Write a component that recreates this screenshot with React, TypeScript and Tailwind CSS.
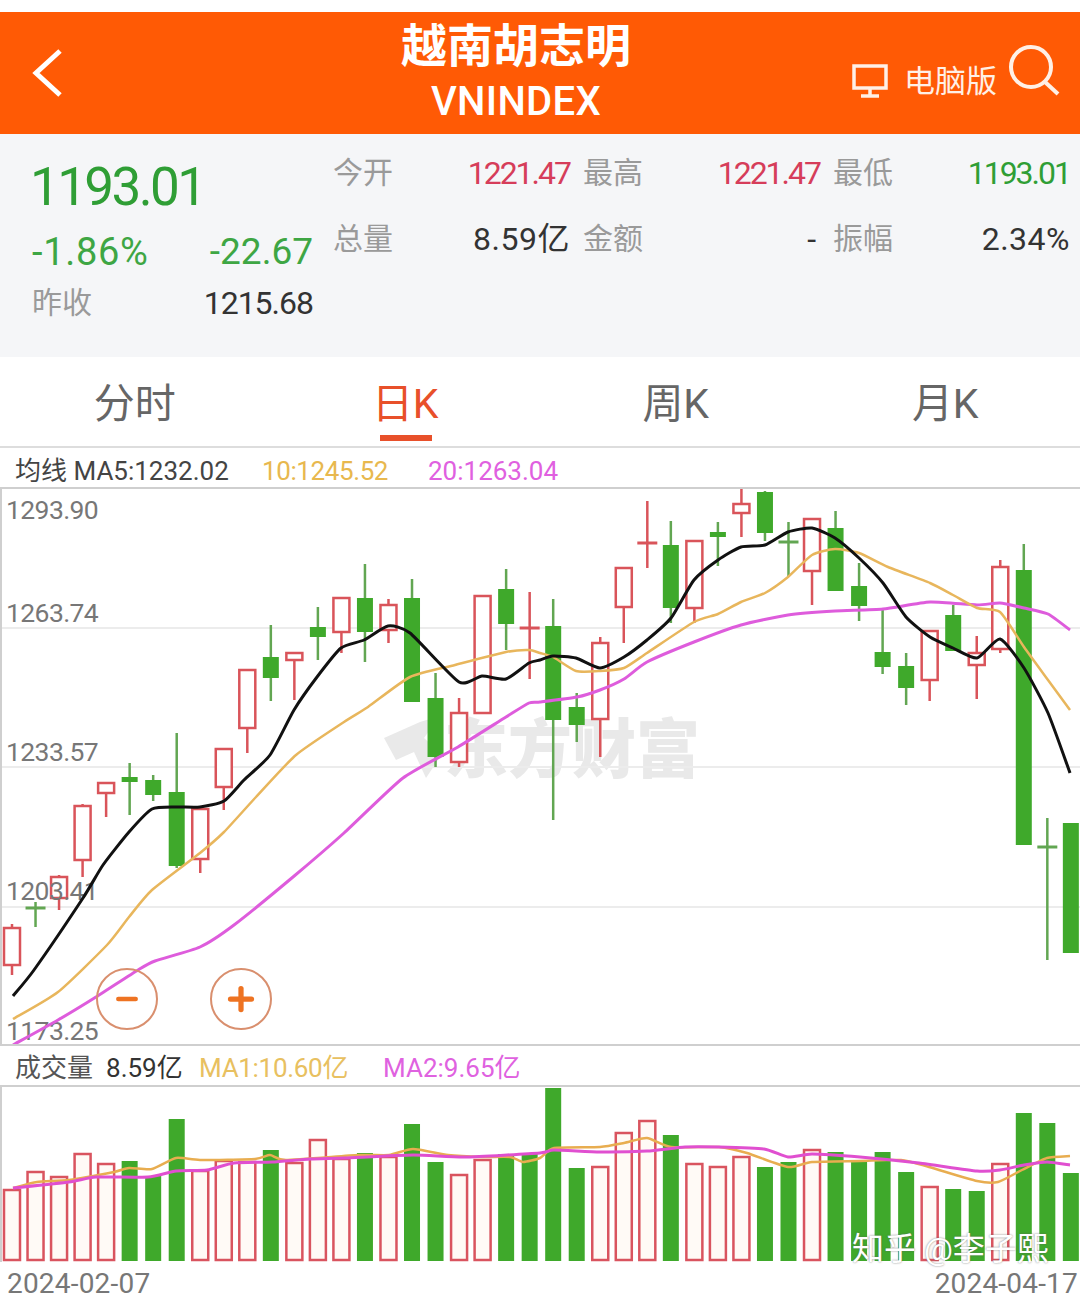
import { Minus, Plus } from 'lucide-react';

type Candle = [wickTop: number, bodyTop: number, bodyBottom: number, wickBottom: number, up: boolean];

const FONT = '"Roboto", "Noto Sans CJK SC", sans-serif';
const RED = '#d9545a';
const GREEN = '#3fa92b';
const WICK_GREEN = '#62a652';

const candleX = (i: number) => 12 + i * 23.53;

const CANDLES: Candle[] = [
  [924, 928, 965, 975, true],
  [902, 907, 909, 927, false],
  [875, 877, 898, 910, true],
  [804, 806, 860, 877, true],
  [783, 783, 793, 817, true],
  [763, 777, 782, 815, false],
  [775, 780, 795, 801, false],
  [733, 792, 866, 868, false],
  [808, 809, 859, 873, true],
  [748, 749, 787, 810, true],
  [669, 670, 728, 753, true],
  [625, 657, 678, 701, false],
  [652, 653, 660, 700, true],
  [607, 627, 637, 660, false],
  [598, 598, 632, 653, true],
  [564, 598, 632, 662, false],
  [599, 605, 630, 643, true],
  [579, 598, 702, 702, false],
  [673, 698, 757, 767, false],
  [698, 713, 762, 767, true],
  [596, 596, 713, 713, true],
  [569, 589, 624, 650, false],
  [592, 627, 629, 679, true],
  [599, 626, 720, 820, false],
  [693, 707, 725, 742, false],
  [637, 643, 719, 757, true],
  [568, 568, 607, 643, true],
  [501, 542, 544, 568, true],
  [521, 545, 608, 623, false],
  [541, 541, 608, 623, true],
  [522, 532, 537, 566, false],
  [489, 504, 513, 537, true],
  [491, 492, 533, 541, false],
  [522, 541, 543, 577, false],
  [519, 519, 571, 605, true],
  [511, 528, 591, 591, false],
  [563, 586, 606, 621, false],
  [608, 652, 667, 674, false],
  [653, 666, 688, 705, false],
  [631, 631, 680, 701, true],
  [605, 615, 651, 651, false],
  [636, 653, 665, 699, true],
  [560, 567, 649, 653, true],
  [544, 570, 845, 845, false],
  [818, 846, 849, 960, false],
  [823, 823, 953, 953, false],
];

const VOLUMES: [number, boolean][] = [
  [1190, true], [1172, true], [1177, true], [1154, true], [1164, true], [1161, false],
  [1176, false], [1119, false], [1171, true], [1161, true], [1162, true], [1150, false],
  [1163, true], [1140, true], [1159, true], [1153, false], [1157, true], [1124, false],
  [1162, false], [1175, true], [1160, true], [1154, false], [1153, false], [1088, false],
  [1168, false], [1167, true], [1133, true], [1121, true], [1135, false], [1164, true],
  [1167, true], [1157, true], [1167, false], [1162, false], [1150, true], [1152, false],
  [1160, false], [1152, false], [1172, false], [1187, true], [1189, false], [1191, false],
  [1164, true], [1113, false], [1123, false], [1173, false],
];

const MA5 = '13,996 34,970 83,898 103,865 129,832 152,809 176,807 200,807 224,801 244,780 270,755 294,710 317,677 341,648 364,640 388,626 410,633 459,682 482,676 506,679 529,663 540,660 553,656 576,658 600,668 624,657 647,640 671,618 694,580 718,560 741,547 765,545 788,532 812,528 835,538 859,558 883,583 906,617 930,637 953,648 977,658 1000,639 1024,668 1048,713 1070,773';
const MA10 = '13,1019 58,992 107,945 129,917 152,890 200,853 224,832 256,797 296,755 344,722 368,707 410,677 455,665 506,652 529,650 540,653 553,657 576,671 600,671 624,668 647,653 694,622 718,614 741,602 765,593 788,577 812,555 835,549 859,553 888,567 930,583 953,595 977,608 1000,612 1024,647 1048,680 1070,710';
const MA20 = '13,1045 58,1020 96,997 138,970 155,961 200,947 234,925 293,877 344,833 403,778 458,747 506,717 529,703 540,702 577,697 600,690 624,679 647,662 694,642 741,625 788,615 835,611 883,609 930,602 977,605 1000,603 1024,608 1048,614 1070,630';
const VOL_MA1 = '13,1188 37,1182 69,1180 114,1172 129,1168 152,1169 176,1158 200,1160 255,1159 270,1155 286,1160 358,1155 389,1155 413,1149 448,1155 482,1157 510,1157 523,1162 540,1158 554,1148 600,1147 624,1143 647,1138 671,1147 719,1147 747,1153 788,1167 812,1162 860,1161 901,1160 929,1167 977,1181 998,1182 1022,1170 1047,1158 1070,1156';
const VOL_MA2 = '13,1188 69,1182 96,1177 148,1177 176,1171 207,1170 234,1163 272,1162 310,1159 344,1158 413,1155 465,1157 540,1153 554,1150 600,1152 647,1151 685,1147 719,1147 764,1149 788,1157 812,1154 860,1157 919,1163 977,1171 1000,1170 1024,1165 1047,1162 1070,1165';

const AXIS_LABELS: [string, number][] = [
  ['1293.90', 519],
  ['1263.74', 622],
  ['1233.57', 761],
  ['1203.41', 900],
  ['1173.25', 1040],
];

// the average lines in the picture are soft curves, so run a loose spline through the points
function smooth(points: string) {
  const pts = points.split(' ').map(p => p.split(',').map(Number));
  let d = `M${pts[0][0]} ${pts[0][1]}`;
  for (let i = 0; i < pts.length - 1; i++) {
    const p0 = pts[i - 1] || pts[i];
    const p1 = pts[i];
    const p2 = pts[i + 1];
    const p3 = pts[i + 2] || p2;
    const c1x = p1[0] + (p2[0] - p0[0]) / 10;
    const c1y = p1[1] + (p2[1] - p0[1]) / 10;
    const c2x = p2[0] - (p3[0] - p1[0]) / 10;
    const c2y = p2[1] - (p3[1] - p1[1]) / 10;
    d += ` C${c1x} ${c1y} ${c2x} ${c2y} ${p2[0]} ${p2[1]}`;
  }
  return d;
}

function Stat({ label, value, color, tracking }: { label: string; value: string; color: string; tracking: string }) {
  return (
    <div className="flex items-center justify-between">
      <span className="text-[30px] leading-none text-[#9a9a9a]">{label}</span>
      <span className={`text-[32px] leading-none ${tracking} ${color}`}>{value}</span>
    </div>
  );
}

function CandleChart() {
  return (
    <svg viewBox="0 489 1080 555" className="block h-[555px] w-[1080px]" style={{ fontFamily: FONT }}>
      <g fill="#e9e9e9" fontSize="64" fontWeight="900">
        <path d="M384 738 L420 722 L440 716 L424 738 L442 754 L426 778 L414 752 L396 760 Z" />
        <text x="444" y="772">东方财富</text>
      </g>
      {[628, 767, 907].map(y => (
        <line key={y} x1="2" x2="1080" y1={y} y2={y} stroke="#ececec" strokeWidth="2" />
      ))}
      {CANDLES.map(([wickTop, bodyTop, bodyBottom, wickBottom, up], i) => {
        const x = candleX(i);
        const line = up ? RED : WICK_GREEN;
        return (
          <g key={i}>
            <line x1={x} x2={x} y1={wickTop} y2={wickBottom} stroke={line} strokeWidth="2.5" />
            {bodyBottom - bodyTop < 4 ? (
              <line x1={x - 10} x2={x + 10} y1={bodyTop + 1} y2={bodyTop + 1} stroke={line} strokeWidth="3" />
            ) : up ? (
              <rect x={x - 8} y={bodyTop} width="16" height={bodyBottom - bodyTop} fill="#ffffff" stroke={RED} strokeWidth="2.5" />
            ) : (
              <rect x={x - 8} y={bodyTop} width="16" height={bodyBottom - bodyTop} fill={GREEN} />
            )}
          </g>
        );
      })}
      {AXIS_LABELS.map(([text, y]) => (
        <text key={text} x="6" y={y} fontSize="26.5" fill="#777777" letterSpacing="-0.6">{text}</text>
      ))}
      <path d={smooth(MA20)} fill="none" stroke="#de5cdc" strokeWidth="3" />
      <path d={smooth(MA10)} fill="none" stroke="#e8b65c" strokeWidth="2.5" />
      <path d={smooth(MA5)} fill="none" stroke="#111111" strokeWidth="3" />
    </svg>
  );
}

function VolumeChart() {
  return (
    <svg viewBox="0 1087 1080 175" className="block h-[175px] w-[1080px]">
      {VOLUMES.map(([top, up], i) => {
        const x = candleX(i);
        return up ? (
          <rect key={i} x={x - 8} y={top} width="16" height={1260 - top} fill="#fffaf6" stroke="#d9545f" strokeWidth="2.5" />
        ) : (
          <rect key={i} x={x - 8} y={top} width="16" height={1261 - top} fill={GREEN} />
        );
      })}
      <path d={smooth(VOL_MA1)} fill="none" stroke="#e8ad50" strokeWidth="2.5" />
      <path d={smooth(VOL_MA2)} fill="none" stroke="#e04fd0" strokeWidth="3" />
    </svg>
  );
}

export default function App() {
  return (
    <div className="h-[1295px] w-[1080px] overflow-hidden bg-white pt-[12px]" style={{ fontFamily: FONT }}>
      {/* header */}
      <div className="flex h-[122px] items-stretch bg-[#ff5a05] text-white">
        <div className="flex w-[400px] items-center pl-[32px]">
          <svg width="32" height="50" viewBox="0 0 32 50" fill="none" stroke="#ffffff" strokeWidth="5">
            <path d="M28 3 L4 25 L28 47" />
          </svg>
        </div>
        <div className="flex w-[232px] flex-col items-center">
          <div className="mt-[6px] h-[56px] whitespace-nowrap text-[46px] leading-[56px] font-bold">越南胡志明</div>
          <div className="mt-[2px] text-[40px] leading-[52px] font-medium tracking-[0.3px] whitespace-nowrap">VNINDEX</div>
        </div>
        <div className="flex flex-1 items-center pt-[8px] pl-[220px]">
          <svg className="mt-[8px]" width="36" height="34" viewBox="0 0 36 34" fill="none" stroke="#fff0e6" strokeWidth="3.5">
            <rect x="2" y="2" width="32" height="22" />
            <path d="M18 24 V31 M9 32 H27" />
          </svg>
          <span className="mt-[8px] ml-[16px] text-[31px] leading-none text-[#fff0e6]">电脑版</span>
          <svg className="mt-[-14px] ml-[11px]" width="52" height="52" viewBox="0 0 52 52" fill="none" stroke="#fff0e6" strokeWidth="4">
            <circle cx="23" cy="23" r="20" />
            <path d="M37 38 L50 50" />
          </svg>
        </div>
      </div>

      {/* quote summary */}
      <div className="flex h-[223px] bg-[#f5f6f8] pr-[10px] pl-[32px]">
        <div className="w-[281px] pt-[22px]">
          <div className="-ml-[2px] text-[53px] leading-[62px] tracking-[-2.6px] text-[#2f9e35]">1193.01</div>
          <div className="mt-[10px] flex items-center justify-between leading-[48px] text-[#3ea644]">
            <span className="text-[38px] tracking-[0.7px]">-1.86%</span>
            <span className="text-[37px] tracking-[0px]">-22.67</span>
          </div>
          <div className="mt-[7px] flex items-center justify-between">
            <span className="text-[30px] leading-[40px] text-[#9a9a9a]">昨收</span>
            <span className="text-[32px] leading-[40px] tracking-[-1px] text-[#333333]">1215.68</span>
          </div>
        </div>
        <div className="ml-[20px] grid flex-1 grid-cols-3 content-start gap-x-[13px] gap-y-[34px] pt-[23px]">
          <Stat label="今开" value="1221.47" color="text-[#d63d5a]" tracking="tracking-[-2px]" />
          <Stat label="最高" value="1221.47" color="text-[#d63d5a]" tracking="tracking-[-2px]" />
          <Stat label="最低" value="1193.01" color="text-[#2f9e35]" tracking="tracking-[-2px]" />
          <Stat label="总量" value="8.59亿" color="text-[#333333]" tracking="tracking-[0.5px]" />
          <Stat label="金额" value="-" color="text-[#333333]" tracking="tracking-[4px]" />
          <Stat label="振幅" value="2.34%" color="text-[#333333]" tracking="tracking-[0.5px]" />
        </div>
      </div>

      {/* period tabs */}
      <div className="flex h-[91px] border-b-2 border-[#dddddd] text-[41px] leading-none text-[#666666]">
        <div className="w-[270px] pt-[27px] text-center">分时</div>
        <div className="relative w-[272px] pt-[27px] text-center text-[#e8502a]">
          日K
          <div className="absolute top-[78px] left-[110px] h-[6px] w-[52px] bg-[#e8502a]" />
        </div>
        <div className="w-[270px] pt-[27px] text-center">周K</div>
        <div className="w-[270px] pt-[27px] text-center">月K</div>
      </div>

      {/* MA legend */}
      <div className="flex h-[39px] items-center pt-[6px] pl-[15px] text-[26px] leading-none whitespace-nowrap">
        <span className="w-[247px] text-[#444444]">均线 MA5:1232.02</span>
        <span className="w-[166px] tracking-[-0.4px] text-[#e8b84e]">10:1245.52</span>
        <span className="text-[#e060e0]">20:1263.04</span>
      </div>

      {/* candles */}
      <div className="relative border-y-2 border-l-2 border-[#cfcfcf]">
        <div className="-ml-[2px]">
          <CandleChart />
        </div>
        <button className="absolute top-[479px] left-[94px] flex h-[62px] w-[62px] items-center justify-center rounded-full border-2 border-[#d98f6e] text-[#ee7322]">
          <Minus size={30} strokeWidth={3.5} />
        </button>
        <button className="absolute top-[479px] left-[208px] flex h-[62px] w-[62px] items-center justify-center rounded-full border-2 border-[#d98f6e] text-[#ee7322]">
          <Plus size={36} strokeWidth={3.5} />
        </button>
      </div>

      {/* volume legend */}
      <div className="flex h-[39px] items-center pt-[5px] pl-[15px] text-[26px] leading-none whitespace-nowrap">
        <span className="text-[#555555]">成交量</span>
        <span className="ml-[13px] w-[93px] text-[#333333]">8.59亿</span>
        <span className="w-[184px] tracking-[-0.3px] text-[#e8c060]">MA1:10.60亿</span>
        <span className="text-[#df62e0]">MA2:9.65亿</span>
      </div>

      {/* volume */}
      <div className="relative border-t-2 border-l-2 border-[#cfcfcf]">
        <div className="-ml-[2px]">
          <VolumeChart />
        </div>
        <div className="absolute top-[143px] left-[850px] text-[32px] leading-[38px] whitespace-nowrap text-white [text-shadow:0_0_2px_rgba(90,90,90,0.8)]">
          知乎 @李子熙
        </div>
      </div>

      {/* date range */}
      <div className="flex justify-between pt-[11px] pr-[2px] pl-[7px] text-[28px] leading-[22px] tracking-[0.2px] text-[#777777]">
        <span>2024-02-07</span>
        <span>2024-04-17</span>
      </div>
    </div>
  );
}
